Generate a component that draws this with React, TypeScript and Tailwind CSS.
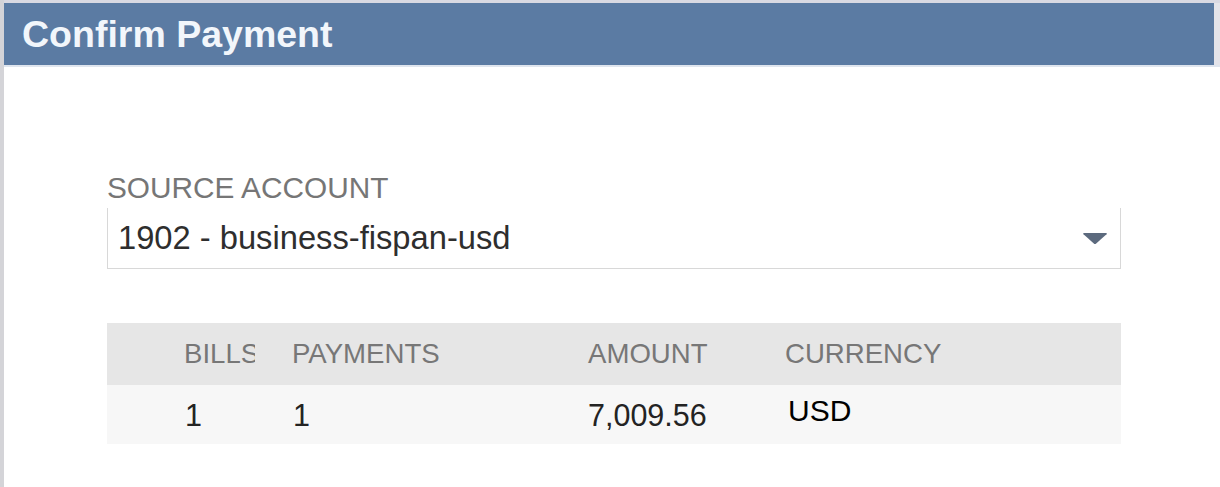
import React from 'react';

const font = { fontFamily: '"Liberation Sans", Arial, Helvetica, sans-serif' };

function Caret() {
  return (
    <svg width="26" height="14" viewBox="0 0 26 14" className="shrink-0">
      <path d="M2 2 H24 Q25.5 2 24.5 3.2 L14.2 12.6 Q13 13.6 11.8 12.6 L1.5 3.2 Q0.5 2 2 2 Z" fill="#5c6a7e" />
    </svg>
  );
}

export default function App() {
  return (
    <div className="w-[1220px] h-[487px] bg-white overflow-hidden flex" style={font}>
      {/* left rule */}
      <div className="w-[4px] bg-[#d4d4d8] shrink-0" />
      <div className="flex-1 flex flex-col">
        <div className="h-[3px] bg-[#d9d9e2]" />
        <div className="flex">
          <header className="flex-1 h-[62px] bg-[#5b7ba3] flex items-center pl-[18px]">
            <h1 className="text-[37.5px] font-bold text-[#f2f6fb] leading-none pt-[1px]">Confirm Payment</h1>
          </header>
          <div className="w-[6px] bg-[#e4e4ea]" />
        </div>
        <div className="h-[2px] bg-[#dfe5ee]" />

        <main className="pl-[103px] pr-[99px] pt-[106px]">
          <label className="block text-[29.8px] leading-none text-[#767676]">SOURCE ACCOUNT</label>
          <div className="mt-[5px] h-[61px] border-x border-b border-[#d8d8d8] flex items-center pl-[10px] pr-[12px]">
            <span className="flex-1 text-[32.7px] text-[#2e2e2e] leading-none pt-[2px]">1902 - business-fispan-usd</span>
            <Caret />
          </div>

          <div className="mt-[54px] leading-none">
            <div className="h-[62px] bg-[#e6e6e6] flex items-center text-[#777777] text-[27.6px] pl-[77px]">
              <div className="w-[108px]">
                <div className="w-[71px] overflow-hidden whitespace-nowrap">BILLS</div>
              </div>
              <div className="w-[296px]">PAYMENTS</div>
              <div className="w-[197px]">AMOUNT</div>
              <div className="flex-1">CURRENCY</div>
            </div>
            <div className="h-[59px] bg-[#f7f7f7] flex items-center text-[#232323] text-[30.5px] pl-[78px]">
              <div className="w-[108px] pt-[2px]">1</div>
              <div className="w-[295px] pt-[2px]">1</div>
              <div className="w-[200px] pt-[2px]">7,009.56</div>
              <div className="flex-1 text-[30px] text-black pb-[6px]">USD</div>
            </div>
          </div>
        </main>
      </div>
    </div>
  );
}
